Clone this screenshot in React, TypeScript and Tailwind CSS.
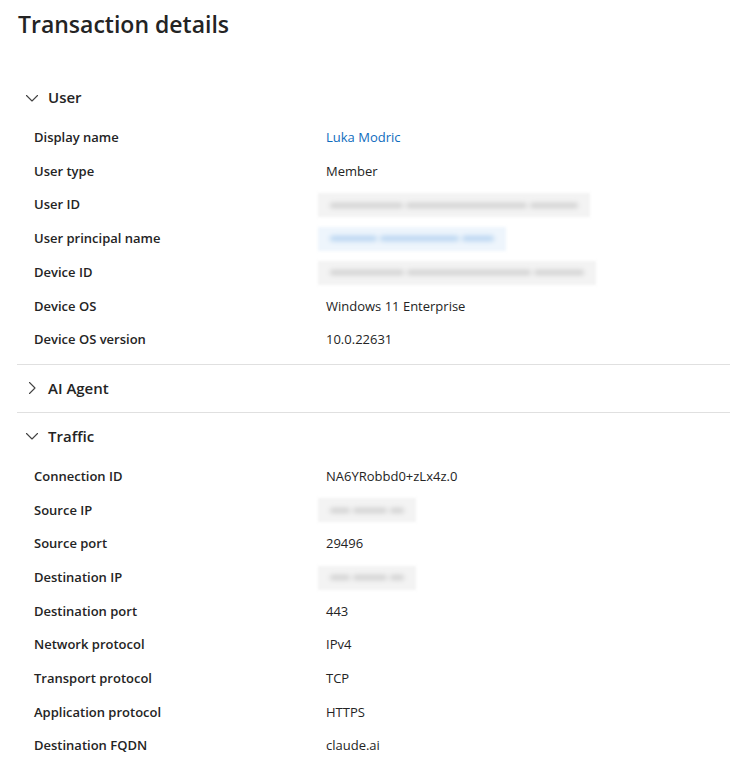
import { useState } from "react";

type Field = {
    label: string;
    value?: string;
    link?: boolean;
    hidden?: { width: number; tint?: "blue" };
};

const userFields: Field[] = [
    { label: "Display name", value: "Luka Modric", link: true },
    { label: "User type", value: "Member" },
    { label: "User ID", hidden: { width: 272 } },
    { label: "User principal name", hidden: { width: 188, tint: "blue" } },
    { label: "Device ID", hidden: { width: 278 } },
    { label: "Device OS", value: "Windows 11 Enterprise" },
    { label: "Device OS version", value: "10.0.22631" },
];

const trafficFields: Field[] = [
    { label: "Connection ID", value: "NA6YRobbd0+zLx4z.0" },
    { label: "Source IP", hidden: { width: 98 } },
    { label: "Source port", value: "29496" },
    { label: "Destination IP", hidden: { width: 98 } },
    { label: "Destination port", value: "443" },
    { label: "Network protocol", value: "IPv4" },
    { label: "Transport protocol", value: "TCP" },
    { label: "Application protocol", value: "HTTPS" },
    { label: "Destination FQDN", value: "claude.ai" },
];

function Chevron({ open }: { open: boolean }) {
    return open ? (
        <svg width="14" height="14" viewBox="0 0 14 14" fill="none">
            <path d="M1.5 4.5 7 10 12.5 4.5" stroke="#424242" strokeWidth="1.1" strokeLinecap="round" strokeLinejoin="round" />
        </svg>
    ) : (
        <svg width="14" height="14" viewBox="0 0 14 14" fill="none">
            <path d="M4.5 1.5 10 7 4.5 12.5" stroke="#424242" strokeWidth="1.1" strokeLinecap="round" strokeLinejoin="round" />
        </svg>
    );
}

// redacted value: a smudged bar instead of the real id
function Redacted({ width, tint }: { width: number; tint?: "blue" }) {
    const blue = tint === "blue";
    const bar = blue ? "bg-[#b4d2f0]" : "bg-[#cfcfcf]";
    return (
        <div
            className={`h-[24px] flex items-center gap-[3px] px-[12px] blur-[1.5px] ${blue ? "bg-[#eef5fc]" : "bg-[#f3f3f3]"}`}
            style={{ width }}
        >
            <div className={`h-[5px] flex-[3] rounded-full blur-[2px] ${bar}`} />
            <div className={`h-[5px] flex-[5] rounded-full blur-[2px] ${bar}`} />
            <div className={`h-[5px] flex-[2] rounded-full blur-[2px] ${bar}`} />
        </div>
    );
}

function Section({
    title,
    fields,
    defaultOpen,
}: {
    title: string;
    fields: Field[];
    defaultOpen: boolean;
}) {
    const [open, setOpen] = useState(defaultOpen);
    return (
        <div>
            <button
                onClick={() => setOpen((o) => !o)}
                className="flex items-center gap-[9px] h-[47px] pl-[8px] text-[15px] font-semibold text-[#242424]"
            >
                <Chevron open={open} />
                {title}
            </button>
            {open && (
                <div className="pb-[7px]">
                    {fields.map((f) => (
                        <div key={f.label} className="flex items-center h-[33.7px] pl-[17px]">
                            <div className="w-[292px] shrink-0 text-[13px] font-semibold text-[#242424]">
                                {f.label}
                            </div>
                            {f.hidden ? (
                                <div className="-ml-[8px]">
                                    <Redacted width={f.hidden.width} tint={f.hidden.tint} />
                                </div>
                            ) : (
                                <div className={`text-[13px] ${f.link ? "text-[#0f6cbd]" : "text-[#242424]"}`}>
                                    {f.value}
                                </div>
                            )}
                        </div>
                    ))}
                </div>
            )}
        </div>
    );
}

export default function App() {
    return (
        <div className="min-h-screen bg-white font-['Open_Sans',sans-serif]">
            <h1 className="pl-[18px] pt-[6px] text-[23px] font-semibold text-[#242424] leading-[36px]">
                Transaction details
            </h1>
            <div className="mt-[32px] ml-[17px]">
                <Section title="User" fields={userFields} defaultOpen />
                <div className="border-t border-[#e0e0e0]">
                    <Section title="AI Agent" fields={[]} defaultOpen={false} />
                </div>
                <div className="border-t border-[#e0e0e0]">
                    <Section title="Traffic" fields={trafficFields} defaultOpen />
                </div>
            </div>
        </div>
    );
}
